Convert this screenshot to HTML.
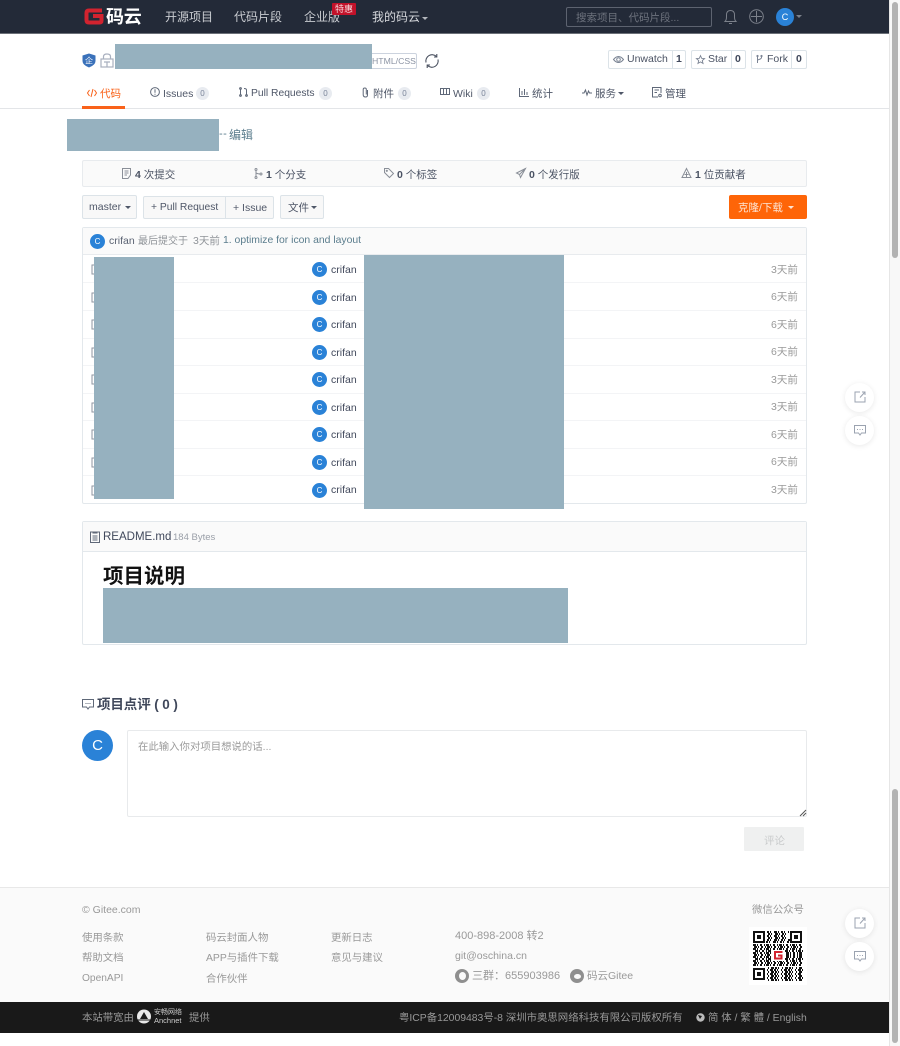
<!DOCTYPE html>
<html lang="zh"><head><meta charset="utf-8"><title>码云</title>
<style>
html,body{margin:0;padding:0;background:#fff}
body{width:900px;height:1046px;position:relative;overflow:hidden;font-family:"Liberation Sans","Noto Sans CJK SC",sans-serif;color:#40485b}
.a{position:absolute;box-sizing:border-box}
.t{position:absolute;white-space:nowrap;line-height:14px;font-size:10.5px}
.r{background:#96b1bf;position:absolute}
.av{position:absolute;width:15px;height:15px;border-radius:50%;background:#2a82d7;color:#fff;font-size:8px;line-height:15px;text-align:center}
.cnt{position:absolute;width:13px;height:13px;border-radius:50%;background:#e8ebf0;color:#7a8599;font-size:8px;line-height:13px;text-align:center}
.caret{position:absolute;width:0;height:0;border-left:3px solid transparent;border-right:3px solid transparent;border-top:3px solid currentColor}
.box{position:absolute;box-sizing:border-box;border:1px solid #dce3e8;border-radius:2px;background:#fff}
.btn{position:absolute;box-sizing:border-box;border:1px solid #dce3e8;background:#f8f8f8;border-radius:2px}
.sep{position:absolute;left:83px;width:723px;height:1px;background:#f3f4f6}
.wd{position:absolute;width:29px;height:29px;border-radius:50%;background:#fff;box-shadow:0 1px 6px rgba(0,0,0,.09)}
svg{position:absolute;overflow:visible}
.f{color:#999;font-size:10.4px}
.b{color:#999;font-size:10.4px}
.ti{color:#999}
</style></head><body>

<!-- navbar -->
<div class="a" style="left:0;top:0;width:889px;height:34px;background:#232a38;border-bottom:1px solid #6b7078"></div>
<svg style="left:84px;top:8px" width="20" height="17" viewBox="0 0 20 17"><path d="M18 2.500H5Q2.500 2.500 2.500 5V12Q2.500 14.500 5 14.500H15.500Q17.500 14.500 17.500 12.500V8H9" fill="none" stroke="#d2232f" stroke-width="4"/></svg>
<div class="t" style="left:106px;top:7px;font-size:18px;line-height:20px;color:#fff;font-weight:bold;letter-spacing:-.2px">码云</div>
<div class="t" style="left:165px;top:10px;font-size:12px;color:#c9ccd1">开源项目</div>
<div class="t" style="left:234px;top:10px;font-size:12px;color:#c9ccd1">代码片段</div>
<div class="t" style="left:304px;top:10px;font-size:12px;color:#c9ccd1">企业版</div>
<div class="a" style="left:332px;top:3px;width:24px;height:12px;background:#c2122a;border-radius:1px;color:#f4d9dc;font-size:9px;line-height:12px;text-align:center">特惠</div>
<div class="t" style="left:372px;top:10px;font-size:12px;color:#d6d8dc">我的码云</div>
<div class="caret" style="left:422px;top:17px;color:#b4b7bd"></div>
<div class="a" style="left:566px;top:7px;width:146px;height:20px;border:1px solid #5d6370;border-radius:2px;background:#232a38"></div>
<div class="t" style="left:576px;top:11px;font-size:10.500px;color:#6e737e">搜索项目、代码片段...</div>
<svg style="left:724px;top:9px" width="13" height="16" viewBox="0 0 13 16" fill="none" stroke="#7c818b"><path d="M1 12.500Q2.500 11 2.500 8V6Q2.500 1.500 6.500 1.500T10.500 6V8Q10.500 11 12 12.500Z"/><path d="M5 14.500H8"/></svg>
<svg style="left:749px;top:9px" width="15" height="15" viewBox="0 0 15 15" fill="none" stroke="#7c818b"><circle cx="7.500" cy="7.500" r="6.800"/><path d="M7.500 2V13M2 7.500H13"/></svg>
<div class="av" style="left:776px;top:8px;width:18px;height:18px;line-height:18px;font-size:9px">C</div>
<div class="caret" style="left:796px;top:15px;color:#7c818b"></div>

<!-- title row -->
<svg style="left:82px;top:53px" width="14" height="15" viewBox="0 0 14 15"><path d="M7 .5L13.500 2.500V8Q13.500 12 7 14.500Q.5 12 .5 8V2.500Z" fill="#3a71ba"/><text x="7" y="10.500" text-anchor="middle" font-size="8" fill="#fff" font-family="Liberation Sans,Noto Sans CJK SC,sans-serif">企</text></svg>
<svg style="left:100px;top:53px" width="14" height="15" viewBox="0 0 14 15" fill="none" stroke="#a9b0bf" stroke-width="1.200"><rect x="1" y="6" width="12" height="8"/><path d="M3.500 6V3.500Q3.500 1 7 1T10.500 3.500V6M4 9H10M7 9V14"/></svg>
<div class="box" style="left:363px;top:53px;width:54px;height:16px;border-color:#ccd3de"></div>
<div class="t" style="left:372px;top:54px;font-size:8.700px;color:#8b93a3">HTML/CSS</div>
<svg style="left:424px;top:53px" width="16" height="16" viewBox="0 0 16 16" fill="none" stroke="#4a5160" stroke-width="1.100"><path d="M2 9.500A6.300 6.300 0 0 1 12.500 3.500M14 6.500A6.300 6.300 0 0 1 3.500 12.500"/><path d="M12.800 1V4H10M3.200 15V12H6"/></svg>
<div class="r" style="left:115px;top:44px;width:257px;height:25px"></div>

<div class="box" style="left:608px;top:50px;width:78px;height:19px"></div>
<div class="a" style="left:672px;top:50px;width:1px;height:19px;background:#dce3e8"></div>
<svg style="left:613px;top:55px" width="11" height="9" viewBox="0 0 11 9" fill="none" stroke="#7b8494"><path d="M.5 4.500Q5.500-1.500 10.500 4.500Q5.500 10.500 .5 4.500Z"/><circle cx="5.500" cy="4.500" r="1.800"/></svg>
<div class="t" style="left:627px;top:52px;font-size:10.500px;color:#4a5263">Unwatch</div>
<div class="t" style="left:676px;top:52px;font-size:10.500px;font-weight:bold">1</div>
<div class="box" style="left:691px;top:50px;width:55px;height:19px"></div>
<div class="a" style="left:731px;top:50px;width:1px;height:19px;background:#dce3e8"></div>
<svg style="left:696px;top:55px" width="9" height="9" viewBox="0 0 10 10" fill="none" stroke="#7b8494"><path d="M5 .7L6.300 3.700L9.500 4L7 6.100L7.800 9.300L5 7.600L2.200 9.300L3 6.100L.5 4L3.700 3.700Z"/></svg>
<div class="t" style="left:708px;top:52px;font-size:10.500px;color:#4a5263">Star</div>
<div class="t" style="left:735px;top:52px;font-size:10.500px;font-weight:bold">0</div>
<div class="box" style="left:751px;top:50px;width:56px;height:19px"></div>
<div class="a" style="left:791px;top:50px;width:1px;height:19px;background:#dce3e8"></div>
<svg style="left:756px;top:55px" width="7" height="9" viewBox="0 0 7 9" fill="none" stroke="#7b8494"><path d="M1.500 1V8M5.500 1V2.500Q5.500 4 1.500 5"/><circle cx="1.500" cy="1" r=".6"/><circle cx="5.500" cy="1" r=".6"/></svg>
<div class="t" style="left:767px;top:52px;font-size:10.500px;color:#4a5263">Fork</div>
<div class="t" style="left:796px;top:52px;font-size:10.500px;font-weight:bold">0</div>

<!-- tabs -->
<div class="a" style="left:0;top:108px;width:889px;height:1px;background:#e3e5e8"></div>
<div class="a" style="left:82px;top:106px;width:43px;height:3px;background:#f9621a"></div>
<svg style="left:87px;top:88px" width="10" height="10" viewBox="0 0 10 10" fill="none" stroke="#f9621a"><path d="M2.500 2L.5 5L2.500 8M7.500 2L9.500 5L7.500 8M6 1L4 9"/></svg>
<div class="t" style="left:100px;top:87px;font-size:10.500px;color:#f9621a">代码</div>
<svg style="left:150px;top:87px" width="10" height="10" viewBox="0 0 10 10" fill="none" stroke="#5f6878"><circle cx="5" cy="5" r="4.400"/><path d="M5 2.200V5.800M5 6.800V7.800"/></svg>
<div class="t" style="left:163px;top:87px;font-size:10.500px;color:#4f5768">Issues</div>
<div class="cnt" style="left:196px;top:87px">0</div>
<svg style="left:239px;top:87px" width="9" height="10" viewBox="0 0 9 10" fill="none" stroke="#5f6878"><path d="M1.500 1.500V8.500M7.500 8.500V3Q7.500 1.500 5 1.500"/><circle cx="1.500" cy="1.500" r=".9"/><circle cx="1.500" cy="8.500" r=".9"/><circle cx="7.500" cy="8.500" r=".9"/></svg>
<div class="t" style="left:251px;top:87px;font-size:10.300px;color:#4f5768">Pull Requests</div>
<div class="cnt" style="left:319px;top:87px">0</div>
<svg style="left:362px;top:87px" width="7" height="11" viewBox="0 0 7 11" fill="none" stroke="#5f6878"><path d="M5.500 3V8Q5.500 10 3.500 10T1.200 8V2.500Q1.200 1 2.800 1T4.300 2.500V7.500"/></svg>
<div class="t" style="left:373px;top:87px;font-size:10.500px;color:#4f5768">附件</div>
<div class="cnt" style="left:398px;top:87px">0</div>
<svg style="left:440px;top:88px" width="10" height="8" viewBox="0 0 10 8" fill="none" stroke="#5f6878"><rect x=".5" y=".5" width="9" height="6"/><path d="M3.500 1V6M6.500 1V6"/></svg>
<div class="t" style="left:453px;top:87px;font-size:10.500px;color:#4f5768">Wiki</div>
<div class="cnt" style="left:477px;top:87px">0</div>
<svg style="left:519px;top:88px" width="10" height="9" viewBox="0 0 10 9" fill="none" stroke="#5f6878"><path d="M.5 0V8.500H10M3 3V7M5.500 1V7M8 4V7"/></svg>
<div class="t" style="left:532px;top:87px;font-size:10.500px;color:#4f5768">统计</div>
<svg style="left:582px;top:89px" width="10" height="7" viewBox="0 0 10 7" fill="none" stroke="#5f6878"><path d="M0 4H2L3.500 1L5 6L6.500 2L7.500 4H10"/></svg>
<div class="t" style="left:595px;top:87px;font-size:10.500px;color:#4f5768">服务</div>
<div class="caret" style="left:618px;top:92px;color:#4f5768"></div>
<svg style="left:652px;top:87px" width="10" height="11" viewBox="0 0 10 11" fill="none" stroke="#5f6878"><path d="M9 6V.5H.5V10H6M2.500 3H7M2.500 5.500H5"/><circle cx="8" cy="8.500" r="1.300"/></svg>
<div class="t" style="left:665px;top:87px;font-size:10.500px;color:#4f5768">管理</div>

<!-- description -->
<div class="r" style="left:67px;top:119px;width:152px;height:32px"></div>
<div class="t" style="left:219px;top:127px;font-size:11px;color:#5b7d8d;letter-spacing:.5px">--</div>
<div class="t" style="left:229px;top:128px;font-size:12px;color:#5b7d8d">编辑</div>

<!-- stats -->
<div class="box" style="left:82px;top:160px;width:725px;height:27px;background:#fafafa;border-color:#e8ebee"></div>
<svg style="left:122px;top:168px" width="9" height="11" viewBox="0 0 9 11" fill="none" stroke="#8a8f98"><path d="M.5.5H8.500V7L6 10.500H.5ZM2.500 3H6.500M2.500 5H6.500M2.500 7H5"/></svg>
<div class="t" style="left:135px;top:168px;font-size:10.500px;color:#4a5263"><b>4</b> 次提交</div>
<svg style="left:254px;top:168px" width="9" height="11" viewBox="0 0 9 11" fill="none" stroke="#8a8f98"><path d="M2 2V9M2 5Q4 6 6 6"/><circle cx="2" cy="1.500" r="1"/><circle cx="2" cy="9.500" r="1"/><circle cx="7" cy="6" r="1"/></svg>
<div class="t" style="left:266px;top:168px;font-size:10.500px;color:#4a5263"><b>1</b> 个分支</div>
<svg style="left:384px;top:168px" width="10" height="10" viewBox="0 0 10 10" fill="none" stroke="#8a8f98"><path d="M.5.5H4.500L9.500 5.500L5.500 9.500L.5 4.500Z"/><circle cx="2.800" cy="2.800" r=".6"/></svg>
<div class="t" style="left:397px;top:168px;font-size:10.500px;color:#4a5263"><b>0</b> 个标签</div>
<svg style="left:516px;top:168px" width="10" height="10" viewBox="0 0 10 10" fill="none" stroke="#8a8f98"><path d="M9.500.5L.5 5L3.500 6.500L4.500 9.500ZM3.500 6.500L9.500.5"/></svg>
<div class="t" style="left:529px;top:168px;font-size:10.500px;color:#4a5263"><b>0</b> 个发行版</div>
<svg style="left:681px;top:168px" width="11" height="10" viewBox="0 0 11 10" fill="none" stroke="#8a8f98"><path d="M5.500.5L1 9.500H10ZM5.500 4V9.500M3.500 6.500L7.500 6.500"/></svg>
<div class="t" style="left:695px;top:168px;font-size:10.500px;color:#4a5263"><b>1</b> 位贡献者</div>

<!-- toolbar -->
<div class="btn" style="left:82px;top:195px;width:55px;height:24px"></div>
<div class="t" style="left:89px;top:200px;font-size:10.500px;color:#4f5768">master</div>
<div class="caret" style="left:125px;top:206px;color:#4f5768"></div>
<div class="btn" style="left:143px;top:196px;width:131px;height:23px"></div>
<div class="a" style="left:225px;top:196px;width:1px;height:23px;background:#dce3e8"></div>
<div class="t" style="left:151px;top:201px;font-size:10.300px;color:#4f5768">+ Pull Request</div>
<div class="t" style="left:233px;top:201px;font-size:10.500px;color:#4f5768">+ Issue</div>
<div class="btn" style="left:280px;top:195px;width:44px;height:24px"></div>
<div class="t" style="left:288px;top:201px;font-size:10.500px;color:#4f5768">文件</div>
<div class="caret" style="left:311px;top:206px;color:#4f5768"></div>
<div class="a" style="left:729px;top:195px;width:78px;height:24px;background:#fe6508;border-radius:2px"></div>
<div class="t" style="left:738px;top:201px;font-size:10.500px;color:#fde4d3">克隆/下载</div>
<div class="caret" style="left:788px;top:206px;color:#fde4d3"></div>

<!-- file table -->
<div class="box" style="left:82px;top:227px;width:725px;height:277px;border-color:#e3e8ec"></div>
<div class="a" style="left:83px;top:228px;width:723px;height:27px;background:#fafafa;border-bottom:1px solid #e8ebee"></div>
<div class="av" style="left:90px;top:234px">C</div>
<div class="t" style="left:109px;top:234px;font-size:10.500px;color:#5a6272">crifan</div>
<div class="t" style="left:138px;top:235px;font-size:10px;color:#909499">最后提交于</div>
<div class="t" style="left:193px;top:234px;font-size:10.500px;color:#909499">3天前</div>
<div class="t" style="left:223px;top:234px;font-size:10.400px;color:#5b7d8d">1. optimize for icon and layout</div>

<div class="sep" style="top:282px"></div><div class="sep" style="top:310px"></div><div class="sep" style="top:338px"></div><div class="sep" style="top:365px"></div><div class="sep" style="top:393px"></div><div class="sep" style="top:420px"></div><div class="sep" style="top:448px"></div><div class="sep" style="top:475px"></div>

<div class="av" style="left:312px;top:262px">C</div><div class="t" style="left:331px;top:263px">crifan</div><div class="t ti" style="left:771px;top:263px">3天前</div>
<div class="av" style="left:312px;top:290px">C</div><div class="t" style="left:331px;top:291px">crifan</div><div class="t ti" style="left:771px;top:290px">6天前</div>
<div class="av" style="left:312px;top:317px">C</div><div class="t" style="left:331px;top:318px">crifan</div><div class="t ti" style="left:771px;top:318px">6天前</div>
<div class="av" style="left:312px;top:345px">C</div><div class="t" style="left:331px;top:346px">crifan</div><div class="t ti" style="left:771px;top:345px">6天前</div>
<div class="av" style="left:312px;top:372px">C</div><div class="t" style="left:331px;top:373px">crifan</div><div class="t ti" style="left:771px;top:373px">3天前</div>
<div class="av" style="left:312px;top:400px">C</div><div class="t" style="left:331px;top:401px">crifan</div><div class="t ti" style="left:771px;top:400px">3天前</div>
<div class="av" style="left:312px;top:427px">C</div><div class="t" style="left:331px;top:428px">crifan</div><div class="t ti" style="left:771px;top:428px">6天前</div>
<div class="av" style="left:312px;top:455px">C</div><div class="t" style="left:331px;top:456px">crifan</div><div class="t ti" style="left:771px;top:455px">6天前</div>
<div class="av" style="left:312px;top:483px">C</div><div class="t" style="left:331px;top:483px">crifan</div><div class="t ti" style="left:771px;top:483px">3天前</div>

<svg style="left:91px;top:264px" width="4" height="232" fill="none" stroke="#8f95a0"><path d="M3 1H1V10H3M3 29H1V38H3M3 56H1V65H3M3 84H1V93H3M3 111H1V120H3M3 139H1V148H3M3 166H1V175H3M3 194H1V203H3M3 222H1V231H3"/></svg>
<div class="r" style="left:94px;top:257px;width:80px;height:242px"></div>
<div class="r" style="left:364px;top:255px;width:200px;height:254px"></div>

<!-- readme -->
<div class="box" style="left:82px;top:521px;width:725px;height:124px;border-color:#e3e8ec"></div>
<div class="a" style="left:83px;top:522px;width:723px;height:30px;background:#fafafa;border-bottom:1px solid #e3e8ec"></div>
<svg style="left:90px;top:531px" width="10" height="12" viewBox="0 0 10 12" fill="none" stroke="#5f6878"><rect x=".5" y="1" width="9" height="10.500"/><path d="M3 .5V2H7V.5M2.500 5H7.500M2.500 7H7.500M2.500 9H7.500"/></svg>
<div class="t" style="left:103px;top:530px;font-size:11.500px;color:#40485b">README.md</div>
<div class="t" style="left:173px;top:531px;font-size:9.500px;color:#9a9fa8">184 Bytes</div>
<div class="t" style="left:103px;top:565px;font-size:20.500px;line-height:24px;font-weight:bold;color:#111">项目说明</div>
<div class="r" style="left:103px;top:588px;width:465px;height:55px"></div>

<!-- comments -->
<svg style="left:82px;top:699px" width="12" height="11" viewBox="0 0 12 11" fill="none" stroke="#5f6878"><path d="M.5.5H11.500V8H7.500L6 10L4.500 8H.5Z"/><path d="M3.500 4.500H4.500M5.500 4.500H6.500M7.500 4.500H8.500"/></svg>
<div class="t" style="left:97px;top:697px;font-size:13.500px;font-weight:bold;line-height:15px;color:#40485b;letter-spacing:-.1px">项目点评 ( 0 )</div>
<div class="av" style="left:82px;top:730px;width:31px;height:31px;line-height:31px;font-size:15px">C</div>
<div class="box" style="left:127px;top:730px;width:680px;height:87px;border-color:#e8eaec"></div>
<div class="t" style="left:138px;top:741px;font-size:10.400px;color:#9a9a9a">在此输入你对项目想说的话...</div>
<svg style="left:800px;top:810px" width="6" height="6" fill="none" stroke="#555"><path d="M0 6L6 0M3 6L6 3"/></svg>
<div class="a" style="left:744px;top:827px;width:60px;height:24px;background:#eff0f0;border-radius:1px"></div>
<div class="t" style="left:764px;top:834px;font-size:10.500px;color:#c9cbcc">评论</div>

<!-- footer -->
<div class="a" style="left:0;top:887px;width:889px;height:115px;background:#fafafa;border-top:1px solid #e8e8e8"></div>
<div class="t f" style="left:82px;top:903px;font-size:10.500px">© Gitee.com</div>
<div class="t f" style="left:82px;top:932px">使用条款</div>
<div class="t f" style="left:82px;top:952px">帮助文档</div>
<div class="t f" style="left:82px;top:972px;font-size:10.200px">OpenAPI</div>
<div class="t f" style="left:206px;top:932px">码云封面人物</div>
<div class="t f" style="left:206px;top:952px">APP与插件下载</div>
<div class="t f" style="left:206px;top:973px">合作伙伴</div>
<div class="t f" style="left:331px;top:932px">更新日志</div>
<div class="t f" style="left:331px;top:952px">意见与建议</div>
<div class="t f" style="left:455px;top:929px;font-size:11px">400-898-2008 转2</div>
<div class="t f" style="left:455px;top:949px;font-size:10.500px">git@oschina.cn</div>
<div class="a" style="left:455px;top:969px;width:14px;height:14px;border-radius:50%;background:#8f8f8f"></div>
<div class="a" style="left:459px;top:972px;width:7px;height:8px;border-radius:50%;background:#fafafa"></div>
<div class="t f" style="left:472px;top:969px;font-size:11px">三群：655903986</div>
<div class="a" style="left:570px;top:969px;width:14px;height:14px;border-radius:50%;background:#8f8f8f"></div>
<div class="a" style="left:574px;top:974px;width:7px;height:5px;border-radius:50%;background:#fafafa"></div>
<div class="t f" style="left:587px;top:969px;font-size:10.500px">码云Gitee</div>
<div class="t f" style="left:752px;top:904px">微信公众号</div>

<div class="a" style="left:749px;top:927px;width:58px;height:58px;background:#fff"></div>
<svg style="left:753px;top:931px" width="50" height="50" viewBox="0 0 50 50" shape-rendering="crispEdges">
<g fill="none" stroke="#111" stroke-width="1.700">
<path stroke-dasharray="2 1 1 3 3 1 1 2" d="M14 1H36M15 3H36M14 5H35M15 7H36M14 9H37M13 11H36"/>
<path stroke-dasharray="3 1 1 2 2 2 1 1" d="M0 14H50M1 16H50M0 18H50M2 20H19M32 20H50M0 22H18M33 22H50M1 24H18M33 24H50M0 26H18M33 26H50M2 28H19M32 28H50M0 30H50M1 32H50M0 34H50"/>
<path stroke-dasharray="1 2 3 1 2 1 1 3" d="M15 37H50M14 39H50M15 41H50M14 43H49M15 45H50M14 47H50M15 49H50"/>
</g>
<g fill="none" stroke="#111" stroke-width="2"><rect x="1" y="1" width="10" height="10"/><rect x="38" y="1" width="10" height="10"/><rect x="1" y="38" width="10" height="10"/></g>
<rect x="4" y="4" width="4" height="4" fill="#111"/><rect x="41" y="4" width="4" height="4" fill="#111"/><rect x="4" y="41" width="4" height="4" fill="#111"/>
<rect x="18" y="19" width="14" height="11" fill="#fff"/>
<path d="M29.500 21H22V27.500H28.500V24.500H25" fill="none" stroke="#d2232f" stroke-width="2"/>
</svg>

<div class="a" style="left:0;top:1002px;width:889px;height:31px;background:#191919"></div>
<div class="t b" style="left:82px;top:1012px">本站带宽由</div>
<svg style="left:137px;top:1009px" width="14" height="15" viewBox="0 0 14 15"><circle cx="7" cy="7.500" r="7" fill="#e8e8e8"/><path d="M7 3L11 10H3Z" fill="#191919"/><path d="M0 11H14" stroke="#191919"/></svg>
<div class="t" style="left:154px;top:1009px;font-size:7px;line-height:8px;color:#ccc">安畅网络</div>
<div class="t" style="left:154px;top:1017px;font-size:7.500px;line-height:8px;color:#ccc">Anchnet</div>
<div class="t b" style="left:189px;top:1012px">提供</div>
<div class="t b" style="left:399px;top:1012px">粤ICP备12009483号-8 深圳市奥思网络科技有限公司版权所有</div>
<svg style="left:696px;top:1013px" width="9" height="9"><circle cx="4.500" cy="4.500" r="4.200" fill="#bbb"/><path d="M2 2L6 3L4 6Z" fill="#191919"/></svg>
<div class="t b" style="left:708px;top:1012px">简 体 / 繁 體 / English</div>

<!-- widgets -->
<div class="wd" style="left:845px;top:383px"></div>
<div class="wd" style="left:845px;top:416px"></div>
<div class="wd" style="left:845px;top:909px"></div>
<div class="wd" style="left:845px;top:942px"></div>
<svg style="left:854px;top:391px" width="12" height="12" viewBox="0 0 12 12" fill="none" stroke="#9ba3b0"><path d="M6 1H1V11H11V6M6 6.500L11 1M8 1H11V4"/></svg>
<svg style="left:854px;top:425px" width="12" height="11" viewBox="0 0 12 11" fill="none" stroke="#9ba3b0"><path d="M.5.500H11.500V8H7.500L6 10L4.500 8H.5Z"/><path d="M3 4.500H4M5.500 4.500H6.500M8 4.500H9"/></svg>
<svg style="left:854px;top:917px" width="12" height="12" viewBox="0 0 12 12" fill="none" stroke="#9ba3b0"><path d="M6 1H1V11H11V6M6 6.500L11 1M8 1H11V4"/></svg>
<svg style="left:854px;top:951px" width="12" height="11" viewBox="0 0 12 11" fill="none" stroke="#9ba3b0"><path d="M.5.500H11.500V8H7.500L6 10L4.500 8H.5Z"/><path d="M3 4.500H4M5.500 4.500H6.500M8 4.500H9"/></svg>

<!-- scrollbar -->
<div class="a" style="left:889px;top:0;width:11px;height:1046px;background:#f8f8f8;border-left:1px solid #e6e6e6"></div>
<div class="a" style="left:892px;top:2px;width:6px;height:256px;background:#b3b3b3;border-radius:3px"></div>
<div class="a" style="left:892px;top:789px;width:6px;height:254px;background:#b3b3b3;border-radius:3px"></div>
</body></html>
